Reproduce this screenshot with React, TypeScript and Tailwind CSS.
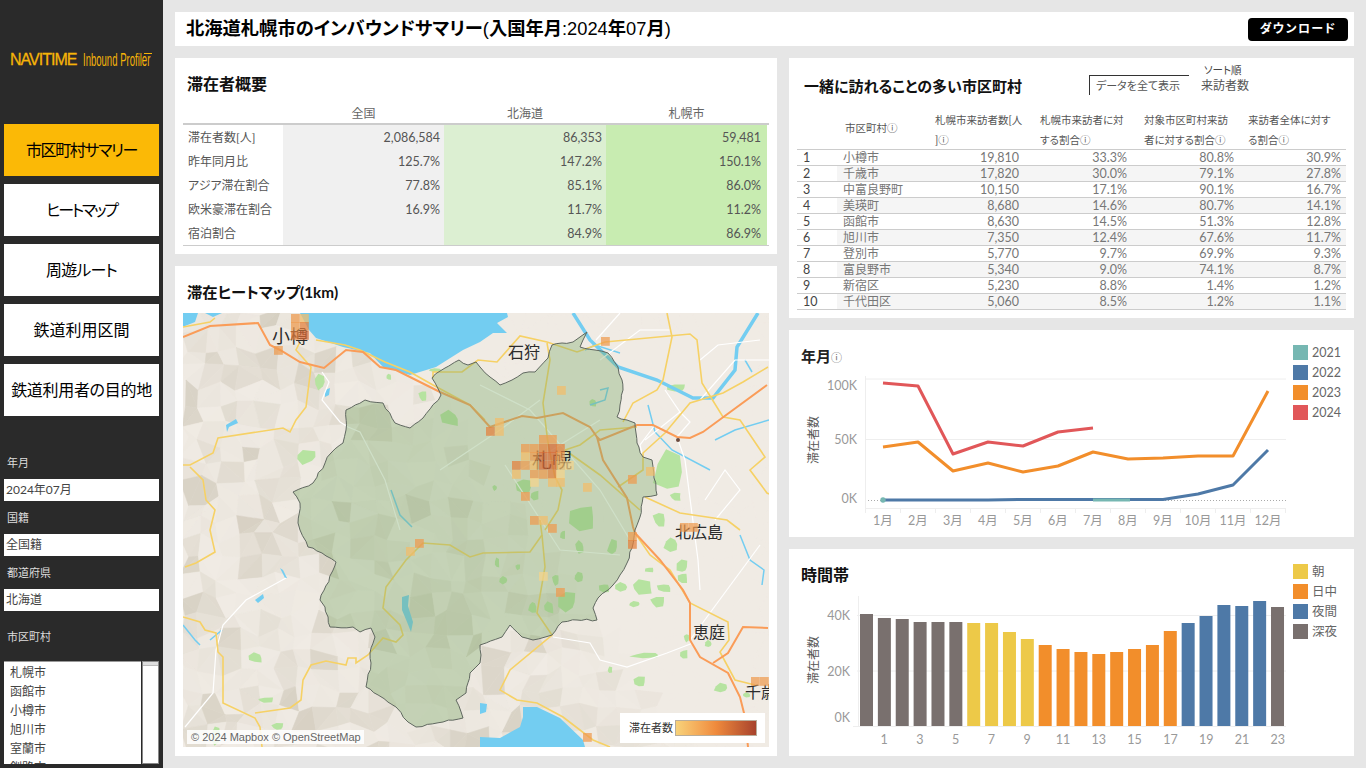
import React from "react";

const FONT = "[font-family:Lato,'Noto_Sans_CJK_JP',sans-serif] [font-feature-settings:'palt']";

type P = [number, number];
const pts = (a: number[]) => {
  const out: string[] = [];
  for (let i = 0; i < a.length; i += 2) out.push(`${a[i]},${a[i + 1]}`);
  return out.join(" ");
};

function rng(seed: number) {
  let s = seed;
  return () => {
    s = (s * 16807) % 2147483647;
    return (s - 1) / 2147483646;
  };
}

const boundary: P[] = [
  [432, 378], [445, 368], [459, 360], [468, 365], [476, 362], [480, 367], [490, 377], [500, 385], [512, 380], [523, 373], [535, 372], [548, 358], [552, 345], [562, 343], [573, 342], [580, 337], [587, 332], [583, 340], [580, 347], [595, 350], [608, 353], [618, 367], [622, 380], [623, 390], [620, 405], [617, 417], [627, 420], [635, 423], [636, 433], [637, 443], [643, 457], [652, 460], [654, 478], [657, 495], [643, 497], [640, 517], [635, 530], [632, 548], [627, 563], [620, 575], [613, 585], [598, 598], [593, 608], [597, 620], [577, 620], [562, 622], [552, 635], [533, 640], [522, 637], [510, 625], [502, 637], [480, 645], [481, 655], [480, 663], [470, 673], [466, 693], [456, 700], [463, 718], [443, 722], [416, 727], [408, 722], [396, 707], [366, 687], [371, 663], [370, 653], [375, 637], [371, 628], [360, 632], [353, 627], [330, 627], [325, 607], [320, 600], [336, 562], [322, 553], [308, 547], [300, 530], [298, 523], [300, 503], [293, 492], [313, 483], [331, 453], [343, 443], [346, 430], [346, 410], [365, 400], [383, 403], [395, 423], [410, 428], [423, 418], [441, 395],
];

function jagged(p: P[]) {
  const r = rng(77);
  const out: string[] = [];
  p.forEach((a, i) => {
    const b = p[(i + 1) % p.length];
    out.push(`${a[0]},${a[1]}`);
    const n = Math.max(1, Math.floor(Math.hypot(b[0] - a[0], b[1] - a[1]) / 5));
    for (let k = 1; k < n; k++) {
      out.push(`${(a[0] + ((b[0] - a[0]) * k) / n + (r() - 0.5) * 1.8).toFixed(1)},${(a[1] + ((b[1] - a[1]) * k) / n + (r() - 0.5) * 1.8).toFixed(1)}`);
    }
  });
  return out.join(" ");
}

function terrain() {
  const r = rng(4242);
  const cells: { p: string; c: string }[] = [];
  const size = 19;
  const jit: number[][] = [];
  for (let j = 0; j <= 25; j++) {
    jit.push([]);
    for (let i = 0; i <= 33; i++) jit[j].push((r() - 0.5) * 12, (r() - 0.5) * 12);
  }
  const pt = (i: number, j: number) => [183 + i * size + jit[j][i * 2], 310 + j * size + jit[j][i * 2 + 1]];
  for (let j = 0; j < 25; j++) {
    for (let i = 0; i < 33; i++) {
      const a = pt(i, j), b = pt(i + 1, j), c = pt(i + 1, j + 1), d = pt(i, j + 1);
      const mx = 183 + i * size, my = 310 + j * size;
      const dist = ((mx - 430) * 260 - (my - 380) * 190) / 322;
      const m = Math.min(1, Math.max(0, -dist / 50));
      const v = r();
      const base = m * (v * v * v) * 24;
      const tris = r() > 0.5 ? [[a, b, c], [a, c, d]] : [[a, b, d], [b, c, d]];
      tris.forEach((t) => {
        const k = base + m * r() * 3;
        const col = `rgb(${Math.round(240 - k)},${Math.round(235 - k * 1.05)},${Math.round(228 - k * 1.3)})`;
        cells.push({ p: t.map((q) => `${q[0].toFixed(1)},${q[1].toFixed(1)}`).join(" "), c: col });
      });
    }
  }
  return cells;
}

const parks: number[][] = [
  [622, 587, 8, 5], [642, 587, 13, 7], [665, 588, 8, 5], [658, 602, 9, 6], [635, 604, 7, 3], [683, 567, 6, 7], [683, 578, 6, 6], [672, 544, 8, 8], [687, 638, 3, 4], [709, 644, 4, 4], [684, 654, 5, 5], [647, 655, 17, 3], [640, 682, 7, 6], [722, 688, 8, 5], [610, 670, 3, 3], [650, 570, 5, 3], [747, 695, 5, 3],
  [613, 547, 6, 8], [580, 547, 5, 6], [563, 535, 3, 5], [579, 577, 6, 6], [568, 602, 10, 10], [549, 608, 6, 6], [533, 607, 5, 7], [556, 580, 4, 6], [504, 580, 5, 4], [497, 563, 3, 5], [605, 588, 6, 5], [518, 567, 3, 3],
  [670, 472, 18, 24], [676, 497, 6, 4], [583, 517, 15, 14], [593, 403, 5, 5], [525, 487, 9, 8], [495, 488, 3, 3], [535, 495, 5, 5], [660, 520, 7, 9], [677, 388, 11, 4],
  [320, 382, 7, 8], [451, 419, 10, 8], [423, 396, 5, 6], [436, 370, 8, 2], [306, 457, 14, 7], [256, 658, 8, 5], [266, 700, 10, 3], [216, 735, 6, 10], [278, 727, 7, 4], [389, 377, 3, 3],
];

function blob(x: number, y: number, rx: number, ry: number, seed: number) {
  const r = rng(seed * 97 + 11);
  const out: string[] = [];
  const n = 7;
  for (let i = 0; i < n; i++) {
    const a = (i / n) * Math.PI * 2;
    const f = 0.65 + r() * 0.55;
    out.push(`${(x + Math.cos(a) * rx * f).toFixed(1)},${(y + Math.sin(a) * ry * f).toFixed(1)}`);
  }
  return out.join(" ");
}

const yellow: number[][] = [
  [183, 465, 190, 465, 213, 453, 218, 438, 283, 428, 290, 432, 296, 420, 306, 407, 311, 367, 296, 350, 300, 342],
  [190, 467, 203, 480, 206, 500, 215, 510, 210, 530, 215, 552, 196, 563, 185, 567],
  [183, 617, 200, 622, 205, 630, 216, 633, 218, 652, 223, 657, 223, 703, 255, 718, 260, 727, 262, 747],
  [255, 713, 290, 708, 301, 700, 303, 680, 311, 665, 326, 661, 346, 665, 348, 658, 356, 658, 356, 663, 368, 655, 383, 638, 396, 642, 403, 635, 400, 625, 383, 608, 386, 587, 406, 560, 423, 543, 450, 545, 470, 557, 483, 553, 530, 552, 542, 535, 540, 520],
  [542, 535, 545, 567, 537, 613, 552, 635, 510, 670, 500, 690, 517, 700, 537, 703, 563, 717, 593, 740, 610, 747],
  [183, 327, 210, 322, 215, 318],
  [316, 340, 345, 345, 360, 350, 385, 362, 410, 372, 433, 385, 470, 405, 485, 420],
  [433, 378, 433, 372, 462, 372, 478, 360, 497, 362, 520, 336, 547, 342, 577, 352, 605, 342, 690, 334, 697, 340, 702, 383, 723, 417, 740, 420, 765, 457, 750, 470, 767, 493, 769, 494],
  [667, 313, 672, 337, 663, 380, 657, 390, 633, 403, 623, 422],
  [547, 343, 550, 360, 543, 403, 548, 443, 555, 477, 562, 490, 558, 510, 545, 530],
  [768, 367, 743, 382, 723, 393, 690, 403, 665, 433, 643, 453, 643, 470, 618, 487],
  [645, 497, 680, 513, 727, 520, 740, 530],
  [637, 427, 600, 430, 580, 445, 565, 450],
  [565, 450, 600, 475, 640, 510],
  [635, 533, 650, 555, 670, 570, 690, 603, 728, 622, 729, 640, 720, 652, 735, 680, 755, 685],
];

const orange: number[][] = [
  [183, 337, 210, 326, 258, 323, 270, 345, 280, 350, 300, 362, 324, 368, 346, 350, 363, 352, 380, 367, 396, 370, 440, 392, 470, 405, 490, 427, 522, 416, 537, 418, 563, 413, 590, 427, 597, 437, 600, 440, 637, 425, 653, 425, 677, 437, 690, 438, 703, 432, 767, 385],
  [597, 437, 603, 460, 627, 498, 633, 527, 635, 533, 660, 560, 683, 590, 690, 603, 690, 640, 700, 657, 728, 673, 740, 697, 745, 717, 748, 747],
  [713, 663, 728, 653, 743, 627, 768, 628],
];

const white: number[][] = [
  [322, 372, 329, 382, 322, 400, 340, 422, 348, 427, 360, 432, 385, 480, 400, 530],
  [286, 578, 246, 600, 223, 625, 216, 650, 213, 693, 185, 727],
  [553, 637, 590, 643, 600, 660, 627, 667, 667, 653, 693, 643],
  [655, 425, 640, 445, 643, 458],
  [665, 390, 680, 412, 690, 422, 677, 437, 685, 460, 698, 560, 700, 590],
  [680, 412, 645, 440],
  [700, 400, 735, 360, 770, 360],
  [690, 640, 760, 545],
  [705, 500, 725, 470, 740, 490, 715, 520],
  [700, 360, 718, 345, 760, 340],
  [480, 385, 530, 410, 600, 490, 630, 540],
  [440, 470, 500, 430, 540, 400],
  [520, 470, 600, 420],
  [505, 465, 560, 550, 620, 555],
  [596, 340, 620, 313],
  [600, 360, 640, 330, 670, 330],
];

const river: number[][] = [
  [573, 313, 590, 340, 618, 367, 657, 380, 693, 398, 713, 398, 735, 370, 737, 347, 758, 313],
  [620, 353, 595, 345, 585, 350],
  [648, 405, 655, 432, 672, 450, 710, 470],
  [715, 440, 735, 430, 769, 420],
  [745, 360, 752, 372],
  [740, 535, 750, 560, 764, 570, 762, 585],
  [600, 390, 608, 388, 605, 400, 590, 405],
  [183, 625, 195, 640, 200, 645],
  [210, 640, 222, 630],
  [391, 490, 400, 515, 412, 527],
];

const heat: [number, number, string][] = [
  [601, 337, "M"], [557, 386, "L"], [495, 418, "L"], [495, 427, "L"], [486, 427, "D"],
  [539, 435, "M"], [548, 435, "M"], [521, 444, "M"], [530, 444, "M"], [539, 444, "D"], [548, 444, "X"], [556, 444, "D"],
  [521, 452, "L"], [530, 452, "M"], [539, 452, "X"], [548, 452, "X"], [556, 452, "M"],
  [512, 461, "D"], [521, 461, "M"], [530, 461, "L"], [539, 461, "X"], [548, 461, "X"], [556, 461, "L"], [565, 461, "P"],
  [512, 470, "L"], [530, 470, "M"], [539, 470, "M"], [548, 470, "D"], [556, 470, "P"],
  [530, 478, "P"], [548, 478, "L"], [556, 478, "L"],
  [521, 492, "M"], [583, 483, "L"], [628, 475, "M"], [646, 467, "L"], [530, 516, "M"], [539, 516, "L"], [548, 524, "M"],
  [415, 539, "M"], [406, 547, "L"], [628, 532, "M"], [628, 540, "D"], [539, 572, "P"], [556, 588, "M"], [583, 733, "M"],
  [751, 677, "M"], [760, 677, "M"], [680, 523, "M"], [689, 523, "M"],
  [291, 314, "M"], [300, 314, "L"], [291, 322, "M"], [300, 322, "D"], [291, 331, "D"], [300, 331, "X"], [274, 346, "M"],
];
const heatColor: Record<string, string> = { P: "#f5d48a", L: "#f2bd6a", M: "#ee9a4e", D: "#e47f3c", X: "#d96a35" };

const mapLabels: [string, number, number, number][] = [
  ["小樽", 272, 343, 18],
  ["石狩", 508, 358, 16],
  ["札幌", 532, 468, 20],
  ["北広島", 675, 538, 16],
  ["恵庭", 693, 638, 16],
  ["千歳", 745, 698, 16],
];

function MapDrawing() {
  const cells = React.useMemo(terrain, []);
  const poly = React.useMemo(() => jagged(boundary), []);
  return (
    <svg viewBox="183 313 586 434" className="block w-full h-full" style={{ fontFamily: "'Noto Sans CJK JP',sans-serif" }}>
      <rect x="183" y="313" width="586" height="434" fill="#f0ebe4" />
      {cells.map((c, i) => (
        <polygon key={i} points={c.p} fill={c.c} stroke={c.c} strokeWidth="0.5" />
      ))}
      {parks.map((p, i) => (
        <polygon key={i} points={blob(p[0], p[1], p[2], p[3], i + 1)} fill="#b6e3a0" />
      ))}
      <polygon points={pts([300, 313, 309, 330, 316, 338, 343, 347, 370, 353, 383, 367, 410, 375, 436, 367, 463, 350, 480, 342, 493, 333, 507, 333, 497, 323, 508, 317, 507, 313])} fill="#73cdf1" />
      <polygon points={pts([183, 313, 198, 313, 195, 322, 185, 326, 183, 326])} fill="#73cdf1" />
      <polygon points={pts([205, 313, 222, 313, 213, 317])} fill="#73cdf1" />
      <polygon points={pts([523, 707, 537, 707, 560, 718, 583, 740, 585, 747, 480, 747, 480, 737, 500, 738, 520, 727, 523, 717])} fill="#73cdf1" />
      <polygon points={pts([480, 703, 487, 704, 486, 712, 480, 714])} fill="#73cdf1" />
      <polygon points={pts([402, 597, 409, 595, 408, 606, 413, 622, 411, 632, 407, 622, 402, 610])} fill="#73cdf1" />
      <polygon points={pts([325, 390, 330, 388, 329, 395, 325, 397])} fill="#73cdf1" />
      <polygon points={pts([226, 425, 236, 419, 238, 423, 229, 427, 227, 432])} fill="#73cdf1" />
      <polygon points={pts([255, 600, 263, 594, 264, 598, 258, 603])} fill="#73cdf1" />
      <polygon points={pts([280, 568, 285, 578, 287, 578, 283, 570])} fill="#73cdf1" />
      {river.map((r, i) => (
        <polyline key={i} points={pts(r)} fill="none" stroke="#73cdf1" strokeWidth={i === 0 ? 3.5 : 1.5} />
      ))}
      {white.map((r, i) => (
        <polyline key={i} points={pts(r)} fill="none" stroke="#ffffff" strokeWidth="1.2" />
      ))}
      {yellow.map((r, i) => (
        <polyline key={i} points={pts(r)} fill="none" stroke="#f6d165" strokeWidth="1.6" />
      ))}
      {orange.map((r, i) => (
        <polyline key={i} points={pts(r)} fill="none" stroke="#fa9c58" strokeWidth="2" />
      ))}
      <polygon points={poly} fill="rgb(125,170,105)" fillOpacity="0.37" stroke="#606860" strokeWidth="1" />
      <circle cx="678" cy="440" r="2" fill="#6b4a3e" />
      {mapLabels.map(([t, x, y, s]) => (
        <text key={t} x={x} y={y} fontSize={s} fill="#2c2c2c">{t}</text>
      ))}
      {heat.map(([x, y, k], i) => (
        <rect key={i} x={x} y={y} width="8.8" height="8.8" fill={heatColor[k]} fillOpacity="0.72" />
      ))}
    </svg>
  );
}

const lineX = (i: number) => 883 + 35 * i;
const series = {
  y2024: [383, 386, 454, 442, 446, 432, 428],
  y2023: [447, 442, 471, 463, 472, 466, 452, 459, 458, 456, 456, 391],
  y2022: [500, 500, 500, 500, 499.5, 499.5, 499.5, 499.5, 499.5, 494, 485, 450],
};
const toLine = (a: number[], s = 0) => a.map((y, i) => `${lineX(i + s)},${y}`).join(" ");

function LineChart() {
  const labelStyle = { fontFamily: "Lato,'Noto Sans CJK JP',sans-serif" };
  return (
    <svg viewBox="789 370 504 167" className="block w-[504px] h-[167px]" style={labelStyle}>
      {[379, 439.5].map((y) => (
        <line key={y} x1="865" x2="1286" y1={y} y2={y} stroke="#eeeeee" strokeWidth="1" />
      ))}
      <line x1="868" x2="1286" y1="500.5" y2="500.5" stroke="#aaaaaa" strokeWidth="1" strokeDasharray="1 2" />
      <line x1="865.5" x2="865.5" y1="376" y2="508" stroke="#eeeeee" />
      <line x1="865" x2="1286" y1="508.5" y2="508.5" stroke="#eeeeee" />
      {Array.from({ length: 13 }).map((_, i) => (
        <line key={i} x1={865.5 + 35 * i} x2={865.5 + 35 * i} y1="508" y2="513" stroke="#eeeeee" />
      ))}
      {[["100K", 390], ["50K", 444], ["0K", 503]].map(([t, y]) => (
        <text key={t} x="857" y={y} textAnchor="end" fontSize="12.5" fill="#999999">{t}</text>
      ))}
      <text transform="translate(818 440) rotate(-90)" textAnchor="middle" fontSize="12" fill="#555555">滞在者数</text>
      {Array.from({ length: 12 }).map((_, i) => (
        <text key={i} x={lineX(i)} y="525" textAnchor="middle" fontSize="12.5" fill="#999999">{i + 1}月</text>
      ))}
      <polyline points={toLine(series.y2023)} fill="none" stroke="#f28e2b" strokeWidth="3" strokeLinejoin="round" />
      <polyline points={toLine(series.y2022)} fill="none" stroke="#4e79a7" strokeWidth="3" strokeLinejoin="round" />
      <polyline points={toLine(series.y2024)} fill="none" stroke="#e15759" strokeWidth="3" strokeLinejoin="round" />
      <line x1="1093" x2="1130" y1="500" y2="500" stroke="#76b7b2" strokeWidth="3" />
      <circle cx="883" cy="500" r="2.7" fill="#76b7b2" />
    </svg>
  );
}

const barTops = [614, 618, 619, 622, 622, 622, 623, 623, 632, 639, 645, 649, 652, 654, 652, 649, 645, 631, 623, 616, 605, 606, 601, 607];
const barColor = (i: number) => (i < 6 || i === 23 ? "#79706e" : i < 10 ? "#edc948" : i < 18 ? "#f28e2b" : "#4e79a7");

function BarChart() {
  return (
    <svg viewBox="789 590 504 166" className="block w-[504px] h-[166px]" style={{ fontFamily: "Lato,'Noto Sans CJK JP',sans-serif" }}>
      {[615.5, 671].map((y) => (
        <line key={y} x1="857" x2="1286" y1={y} y2={y} stroke="#eeeeee" />
      ))}
      <line x1="858.5" x2="858.5" y1="596" y2="726" stroke="#eeeeee" />
      <line x1="853" x2="1286" y1="726.5" y2="726.5" stroke="#eeeeee" />
      {[["40K", 620], ["20K", 676], ["0K", 722]].map(([t, y]) => (
        <text key={t} x="850" y={y} textAnchor="end" fontSize="12.5" fill="#999999">{t}</text>
      ))}
      <text transform="translate(818 660) rotate(-90)" textAnchor="middle" fontSize="12" fill="#555555">滞在者数</text>
      {barTops.map((t, i) => (
        <rect key={i} x={860 + 17.87 * i} y={t} width="13" height={726 - t} fill={barColor(i)} />
      ))}
      {Array.from({ length: 12 }).map((_, i) => (
        <text key={i} x={884 + 35.8 * i} y="744" textAnchor="middle" fontSize="12.5" fill="#999999">{2 * i + 1}</text>
      ))}
    </svg>
  );
}

function Legend({ items, className }: { items: [string, string][]; className: string }) {
  return (
    <div className={`flex flex-col gap-[5px] ${className}`}>
      {items.map(([t, c]) => (
        <div key={t} className="flex items-center gap-1 h-[15px] text-[12.5px] text-[#666]">
          <span className="block w-[15px] h-[15px]" style={{ backgroundColor: c }} />
          <span className="pt-[2px]">{t}</span>
        </div>
      ))}
    </div>
  );
}

const summaryRows = [
  ["滞在者数[人]", "2,086,584", "86,353", "59,481"],
  ["昨年同月比", "125.7%", "147.2%", "150.1%"],
  ["アジア滞在割合", "77.8%", "85.1%", "86.0%"],
  ["欧米豪滞在割合", "16.9%", "11.7%", "11.2%"],
  ["宿泊割合", "", "84.9%", "86.9%"],
];

const cityRows = [
  ["1", "小樽市", "19,810", "33.3%", "80.8%", "30.9%"],
  ["2", "千歳市", "17,820", "30.0%", "79.1%", "27.8%"],
  ["3", "中富良野町", "10,150", "17.1%", "90.1%", "16.7%"],
  ["4", "美瑛町", "8,680", "14.6%", "80.7%", "14.1%"],
  ["5", "函館市", "8,630", "14.5%", "51.3%", "12.8%"],
  ["6", "旭川市", "7,350", "12.4%", "67.6%", "11.7%"],
  ["7", "登別市", "5,770", "9.7%", "69.9%", "9.3%"],
  ["8", "富良野市", "5,340", "9.0%", "74.1%", "8.7%"],
  ["9", "新宿区", "5,230", "8.8%", "1.4%", "1.2%"],
  ["10", "千代田区", "5,060", "8.5%", "1.2%", "1.1%"],
];

const navItems: [string, string][] = [
  ["市区町村サマリー", "tracking-[-1.4px] bg-[#fbb906]"],
  ["ヒートマップ", "tracking-[-2.3px] bg-white"],
  ["周遊ルート", "tracking-[-0.8px] bg-white"],
  ["鉄道利用区間", "bg-white"],
  ["鉄道利用者の目的地", "tracking-[-0.3px] bg-white"],
];
const cities = ["札幌市", "函館市", "小樽市", "旭川市", "室蘭市", "釧路市"];

function Filter({ label, value, mt }: { label: string; value: string; mt: string }) {
  return (
    <div className={mt}>
      <div className="h-4 pl-[3px] text-[11px] leading-4 text-[#dddddd]">{label}</div>
      <div className="mt-2 h-[22px] bg-white pl-[2px] text-[12px] leading-[21px] text-[#444]">{value}</div>
    </div>
  );
}

export default function App() {
  return (
    <div className={`flex h-[768px] w-[1366px] overflow-hidden bg-[#e6e6e6] ${FONT}`}>
      <aside className="h-full w-[163px] shrink-0 bg-[#2a2a2a] px-1">
        <div className="flex h-[124px] items-start pl-[6px] pt-[52px] text-[#f6b408]">
          <span className="text-[16px] leading-4 tracking-[-1px] [-webkit-text-stroke:0.3px_#f6b408] [font-family:'Liberation_Sans',sans-serif]">NAVITIME</span>
          <span className="relative ml-[7px] block w-[69px] whitespace-nowrap">
            <span className="block origin-left scale-x-[0.53] text-[18px] leading-4 [font-family:'Liberation_Sans',sans-serif]">Inbound Profiler</span>
            <span className="absolute right-0 top-[1px] h-px w-[8px] bg-[#f6b408]" />
          </span>
        </div>
        <nav className="flex flex-col gap-2">
          {navItems.map(([t, c]) => (
            <div key={t} className={`flex h-[52px] items-center justify-center text-[16px] text-black ${c}`}>
              {t}
            </div>
          ))}
        </nav>
        <Filter label="年月" value="2024年07月" mt="mt-[39px]" />
        <Filter label="国籍" value="全国籍" mt="mt-[9px]" />
        <Filter label="都道府県" value="北海道" mt="mt-[9px]" />
        <div className="mt-[18px] h-4 pl-[3px] text-[11px] leading-4 text-[#dddddd]">市区町村</div>
        <div className="mt-4 flex h-[103px] gap-px">
          <div className="h-full w-[137px] overflow-hidden border-t border-[#999] bg-white pl-[6px] pt-px text-[12px] leading-[19px] text-[#444]">
            {cities.map((c) => (
              <div key={c} className="h-[19px]">{c}</div>
            ))}
          </div>
          <div className="h-full w-[17px] border border-[#888] bg-white">
            <div className="h-[4px] border-b border-[#bbb] bg-[#ddd]" />
          </div>
        </div>
      </aside>

      <main className="flex min-w-0 flex-1 flex-col gap-3 p-3">
        <header className="flex h-[34px] items-center justify-between bg-white pl-[11px] pr-[6px] text-black">
          <h1 className="text-[18.3px] font-bold leading-none">
            北海道札幌市のインバウンドサマリー<span className="font-normal [font-family:'Liberation_Sans',sans-serif]">(</span>入国年月<span className="font-normal [font-family:'Liberation_Sans',sans-serif]">:2024</span>年<span className="font-normal [font-family:'Liberation_Sans',sans-serif]">07</span>月<span className="font-normal [font-family:'Liberation_Sans',sans-serif]">)</span>
          </h1>
          <div className="flex h-[23px] w-[100px] items-center justify-center rounded bg-black text-[12px] font-bold tracking-[1.4px] text-white">ダウンロード</div>
        </header>

        <div className="flex flex-1 gap-3">
          <div className="flex w-[602px] flex-col gap-3">
            <section className="h-[196px] bg-white px-2">
              <h2 className="h-[47px] pl-1 pt-[15px] text-[16px] font-bold leading-[22px] text-[#111]">滞在者概要</h2>
              <div className="grid h-[20px] grid-cols-[100px_161px_162px_161px] border-b-2 border-[#ccc] text-center text-[12px] leading-[18px] text-[#666]">
                <div />
                <div>全国</div>
                <div>北海道</div>
                <div>札幌市</div>
              </div>
              <div className="grid grid-cols-[100px_161px_162px_161px] border-b border-[#ccc] text-[12.5px] leading-[25px] text-[#555]">
                {summaryRows.map((r) => (
                  <React.Fragment key={r[0]}>
                    <div className="h-6 pl-[5px] text-[12px]">{r[0]}</div>
                    <div className="h-6 bg-[#f0f0f0] pr-[4px] text-right">{r[1]}</div>
                    <div className="h-6 bg-[#dcefd2] pr-[4px] text-right">{r[2]}</div>
                    <div className="h-6 bg-[#c8ecb1] pr-[6px] text-right">{r[3]}</div>
                  </React.Fragment>
                ))}
              </div>
            </section>
            <section className="flex h-[490px] flex-col bg-white px-2 pb-[9px]">
              <h2 className="h-[47px] shrink-0 pl-1 pt-[15px] text-[15.3px] font-bold leading-[22px] text-[#111]">滞在ヒートマップ(1km)</h2>
              <div className="relative min-h-0 flex-1 overflow-hidden">
                <MapDrawing />
                <div className="absolute bottom-[3px] left-[4px] h-[14px] w-[177px] bg-white/85 pl-1 text-[11px] leading-[14px] text-[#666] [font-family:'Liberation_Sans',sans-serif]">© 2024 Mapbox © OpenStreetMap</div>
                <div className="absolute bottom-[4px] right-[4px] flex h-[30px] w-[145px] items-center gap-[2px] bg-white pl-[9px] text-[11px] text-[#333]">
                  <span>滞在者数</span>
                  <span className="block h-[16px] w-[82px] border border-[#b9ad9a] bg-gradient-to-r from-[#f7d27a] via-[#ef8a3c] to-[#a8432c]" />
                </div>
              </div>
            </section>
          </div>

          <div className="flex w-[565px] flex-col gap-3">
            <section className="h-[260px] bg-white px-2">
              <div className="flex h-[47px]">
                <h2 className="ml-[7px] w-[285px] pt-[17px] text-[15px] font-bold leading-[22px] text-[#111]">一緒に訪れることの多い市区町村</h2>
                <div className="mt-[17px] h-[20px] w-[100px] border-l border-t border-[#333] pl-[6px] text-[11px] leading-[20px] text-[#555]">データを全て表示</div>
                <div className="ml-3 pt-[5px] text-[#444]">
                  <div className="pl-[3px] text-[10.5px] leading-[14px]">ソート順</div>
                  <div className="text-[12px] leading-[17px] text-[#555]">来訪者数</div>
                </div>
              </div>
              <div className="grid h-[45px] grid-cols-[48px_90px_105px_104px_104px_98px] border-b border-[#ccc] text-[10.5px] leading-[20px] text-[#555]">
                <div />
                <div className="flex items-center">市区町村ⓘ</div>
                <div className="pt-[5px]">札幌市来訪者数[人<br />]ⓘ</div>
                <div className="pt-[5px]">札幌市来訪者に対<br />する割合ⓘ</div>
                <div className="pt-[5px]">対象市区町村来訪<br />者に対する割合ⓘ</div>
                <div className="pt-[5px]">来訪者全体に対す<br />る割合ⓘ</div>
              </div>
              {cityRows.map((r, i) => (
                <div key={r[0]} className="grid h-4 grid-cols-[40px_98px_105px_104px_104px_98px] border-b border-[#ccc] text-[12.5px] leading-[15px] text-[#777]">
                  <div className="pl-[6px] text-[#444]">{r[0]}</div>
                  <div className={`pl-[6px] text-[12px] ${i % 2 ? "bg-[#f5f5f5]" : ""}`}>{r[1]}</div>
                  <div className={`pr-[21px] text-right ${i % 2 ? "bg-[#f5f5f5]" : ""}`}>{r[2]}</div>
                  <div className={`pr-[17px] text-right ${i % 2 ? "bg-[#f5f5f5]" : ""}`}>{r[3]}</div>
                  <div className={`pr-[14px] text-right ${i % 2 ? "bg-[#f5f5f5]" : ""}`}>{r[4]}</div>
                  <div className={`pr-[5px] text-right ${i % 2 ? "bg-[#f5f5f5]" : ""}`}>{r[5]}</div>
                </div>
              ))}
            </section>

            <section className="flex h-[207px] bg-white">
              <div className="w-[504px]">
                <h2 className="h-[40px] pl-3 pt-[15px] text-[15px] font-bold leading-[22px] text-[#222]">
                  年月<span className="text-[11px] font-normal text-[#666]">ⓘ</span>
                </h2>
                <LineChart />
              </div>
              <Legend
                className="pt-[15px]"
                items={[["2021", "#76b7b2"], ["2022", "#4e79a7"], ["2023", "#f28e2b"], ["2024", "#e15759"]]}
              />
            </section>

            <section className="flex h-[207px] bg-white">
              <div className="w-[504px]">
                <h2 className="h-[41px] pl-3 pt-[15px] text-[16px] font-bold leading-[22px] text-[#111]">時間帯</h2>
                <BarChart />
              </div>
              <Legend
                className="pt-[15px]"
                items={[["朝", "#edc948"], ["日中", "#f28e2b"], ["夜間", "#4e79a7"], ["深夜", "#79706e"]]}
              />
            </section>
          </div>
        </div>
      </main>
    </div>
  );
}
